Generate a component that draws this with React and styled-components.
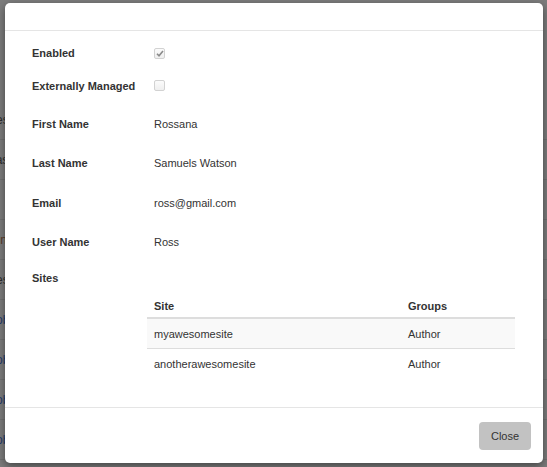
import React from "react";
import styled, { createGlobalStyle } from "styled-components";

const GlobalStyle = createGlobalStyle`
  html, body {
    margin: 0;
    padding: 0;
    width: 547px;
    height: 467px;
    overflow: hidden;
  }
  body {
    font-family: "Liberation Sans", Arial, sans-serif;
    font-size: 11px;
    color: #333;
  }
`;

const Page = styled.div`
  position: relative;
  width: 547px;
  height: 467px;
  background-color: #7c7c7c;
  overflow: hidden;
`;

const BehindList = styled.div`
  display: flex;
  flex-direction: column;
  padding-top: 100px;
`;

const BehindRow = styled.div`
  height: 39px;
  border-bottom: 1px solid #717171;
  display: flex;
  align-items: center;
  font-size: 12px;
  color: ${(props) => props.$color || "#2d2d2d"};
  margin-left: ${(props) => props.$shift}px;
  white-space: nowrap;
`;

const Modal = styled.div`
  position: absolute;
  left: 5px;
  top: 3px;
  width: 538px;
  height: 460px;
  background-color: #fff;
  border-radius: 5px;
  box-shadow: 0 3px 9px rgba(0, 0, 0, 0.45);
  display: flex;
  flex-direction: column;
  box-sizing: border-box;
`;

const ModalHeader = styled.div`
  height: 27px;
  border-bottom: 1px solid #e5e5e5;
`;

const ModalBody = styled.div`
  flex: 1;
  padding: 8px 27px 0 27px;
  display: flex;
  flex-direction: column;
`;

const Row = styled.div`
  display: grid;
  grid-template-columns: 122px 1fr;
  align-items: center;
  height: ${(props) => props.$h}px;
`;

const Label = styled.div`
  font-weight: bold;
  color: #333;
`;

const Value = styled.div`
  color: #333;
`;

const Check = styled.span`
  display: inline-flex;
  align-items: center;
  justify-content: center;
  width: 9px;
  height: 9px;
  border: 1px solid #d2d2d2;
  border-radius: 2px;
  background: linear-gradient(#fbfbfb, #efefef);
`;

const SitesTable = styled.table`
  margin-left: 115px;
  width: 368px;
  border-collapse: collapse;
`;

const HeadCell = styled.th`
  text-align: left;
  font-weight: bold;
  padding: 0 7px;
  height: 22px;
  vertical-align: middle;
  border-bottom: 2px solid #dddddd;
  width: ${(props) => props.$w || "auto"};
`;

const BodyRow = styled.tr`
  background-color: ${(props) => (props.$striped ? "#f9f9f9" : "#fff")};
  border-bottom: ${(props) => (props.$last ? "none" : "1px solid #dddddd")};
`;

const Cell = styled.td`
  padding: 0 7px;
  height: 29px;
  vertical-align: middle;
`;

const ModalFooter = styled.div`
  height: 56px;
  border-top: 1px solid #e5e5e5;
  display: flex;
  justify-content: flex-end;
  align-items: flex-start;
  padding: 14px 12px 0 0;
  box-sizing: border-box;
`;

const CloseButton = styled.button`
  width: 52px;
  height: 28px;
  border: none;
  border-radius: 4px;
  background-color: #c2c2c2;
  color: #333;
  font-family: "Liberation Sans", Arial, sans-serif;
  font-size: 11px;
  cursor: pointer;
`;

const CheckMark = () => (
  <svg width="8" height="7" viewBox="0 0 8 7">
    <path d="M1 3.8 L3 5.8 L7 1" fill="none" stroke="#8a8a8a" strokeWidth="1.6" />
  </svg>
);

const behind = [
  { text: "Sites", shift: -18 },
  { text: "Last", shift: -11 },
  { text: "", shift: 0 },
  { text: "Admin", shift: -27, color: "#5a3a28" },
  { text: "Sites", shift: -18 },
  { text: "Job", shift: -10, color: "#243a6a" },
  { text: "Job", shift: -10, color: "#243a6a" },
  { text: "Job", shift: -10, color: "#243a6a" },
  { text: "Job", shift: -10, color: "#243a6a" },
];

const fields = [
  { label: "First Name", value: "Rossana", h: 38 },
  { label: "Last Name", value: "Samuels Watson", h: 40 },
  { label: "Email", value: "ross@gmail.com", h: 40 },
  { label: "User Name", value: "Ross", h: 38 },
];

const sites = [
  { site: "myawesomesite", groups: "Author" },
  { site: "anotherawesomesite", groups: "Author" },
];

const App = () => {
  return (
    <Page>
      <GlobalStyle />
      <BehindList>
        {behind.map((item, i) => (
          <BehindRow key={i} $shift={item.shift} $color={item.color}>
            {item.text}
          </BehindRow>
        ))}
      </BehindList>

      <Modal>
        <ModalHeader />
        <ModalBody>
          <Row $h={28}>
            <Label>Enabled</Label>
            <div>
              <Check>
                <CheckMark />
              </Check>
            </div>
          </Row>
          <Row $h={38}>
            <Label>Externally Managed</Label>
            <div>
              <Check />
            </div>
          </Row>
          {fields.map((f) => (
            <Row key={f.label} $h={f.h}>
              <Label>{f.label}</Label>
              <Value>{f.value}</Value>
            </Row>
          ))}
          <Row $h={34}>
            <Label>Sites</Label>
          </Row>
          <SitesTable>
            <thead>
              <tr>
                <HeadCell $w="240px">Site</HeadCell>
                <HeadCell>Groups</HeadCell>
              </tr>
            </thead>
            <tbody>
              {sites.map((s, i) => (
                <BodyRow key={s.site} $striped={i % 2 === 0} $last={i === sites.length - 1}>
                  <Cell>{s.site}</Cell>
                  <Cell>{s.groups}</Cell>
                </BodyRow>
              ))}
            </tbody>
          </SitesTable>
        </ModalBody>
        <ModalFooter>
          <CloseButton>Close</CloseButton>
        </ModalFooter>
      </Modal>
    </Page>
  );
};

export default App;
